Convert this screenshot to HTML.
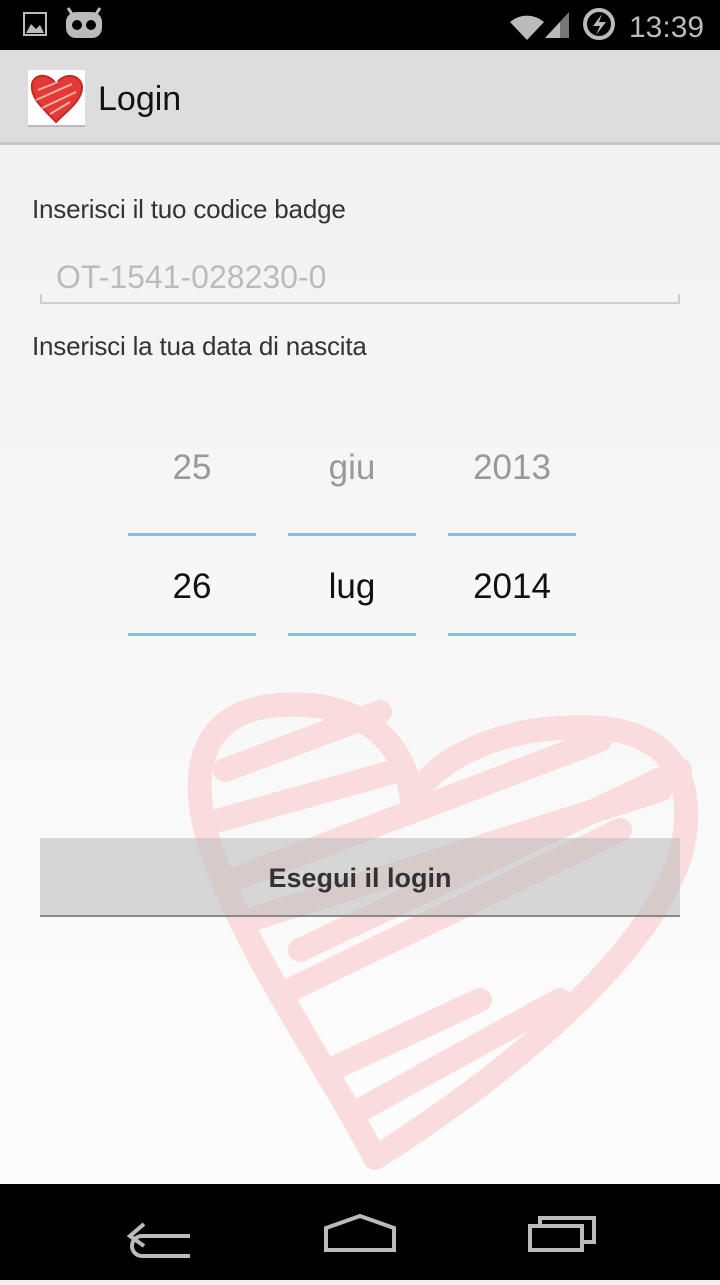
<!DOCTYPE html>
<html><head><meta charset="utf-8"><style>
*{margin:0;padding:0;box-sizing:border-box}
body{width:720px;height:1280px;overflow:hidden;font-family:"Liberation Sans",sans-serif;position:relative;background:linear-gradient(#f0f0f0,#f6f6f6 500px,#fcfcfc 1100px)}
.sb{position:absolute;top:0;left:0;width:720px;height:50px;background:#000}
.ab{position:absolute;top:50px;left:0;width:720px;height:95px;background:#dddddd;border-bottom:3px solid #c6c6c6}
.t{position:absolute;font-size:26px;color:#333;letter-spacing:-0.2px}
.nav{position:absolute;top:1184px;left:0;width:720px;height:96px;background:#000}
.col{position:absolute;width:128px;text-align:center;font-size:35px}
.ln{position:absolute;width:128px;height:3px;background:#6dc8e8}
</style></head><body>
<div class="sb">
<svg width="720" height="50" style="position:absolute;left:0;top:0">
<rect x="24" y="13" width="22" height="22" fill="none" stroke="#bbb" stroke-width="2"/>
<path d="M26 33 L31 24 L36 29 L40 25 L44 33 Z" fill="#bbb"/>
<path d="M68 8 L72 14 M100 8 L96 14" stroke="#bbb" stroke-width="3"/>
<rect x="66" y="12" width="36" height="26" rx="10" fill="#bbb"/>
<circle cx="77" cy="25" r="5" fill="#000"/><circle cx="91" cy="25" r="5" fill="#000"/>
<path d="M510 22 A26 26 0 0 1 544 22 L527 40 Z" fill="#bbb"/>
<path d="M545 38 L569 12 L569 38 Z" fill="#777"/><path d="M545 38 L560 22 L560 38 Z" fill="#bbb"/>
<circle cx="599" cy="24" r="14" fill="none" stroke="#bbb" stroke-width="4"/>
<path d="M602 14 L593 26 L600 26 L596 35 L606 22 L599 22 Z" fill="#bbb"/>
<text x="629" y="37" font-family="Liberation Sans" font-size="30" fill="#bbb">13:39</text>
</svg></div>
<div class="ab">
<div style="position:absolute;left:28px;top:20px;width:57px;height:57px;background:#fff;border-bottom:2px solid #bbb">
<svg width="57" height="57"><path d="M28 52 C15 38 2 28 4 14 C6 4 20 2 28 14 C36 2 52 4 54 16 C55 30 40 40 28 52Z" fill="#e53935" stroke="#c62828" stroke-width="2"/><path d="M10 20 L30 12 M8 30 L44 14 M14 38 L48 22 M22 44 L42 32" stroke="#fff" stroke-width="2" opacity=".6"/></svg></div>
<div style="position:absolute;left:98px;top:30px;font-size:34px;color:#111">Login</div>
</div>
<svg width="720" height="1280" style="position:absolute;left:0;top:0">
<g fill="none" stroke="#fadcdc" stroke-width="24" stroke-linecap="round" stroke-linejoin="round">
<path d="M375 1158 C330 1070 250 960 215 860 C185 780 195 710 280 705 C360 700 405 740 412 800 C440 750 520 722 600 728 C680 735 695 790 682 850 C660 930 560 1040 375 1158Z"/>
<path d="M225 770 L380 712 M220 820 L400 770 M232 880 L600 740 M250 920 L660 790 M290 990 L620 830 M330 1070 L480 1000 M360 1110 L560 1000 M300 950 L680 770"/>
</g>
</svg>
<div class="t" style="left:32px;top:194px">Inserisci il tuo codice badge</div>
<div style="position:absolute;left:56px;top:259px;font-size:32px;color:#bbb">OT-1541-028230-0</div>
<div style="position:absolute;left:40px;top:302px;width:640px;height:2px;background:#cfcfcf"></div>
<div style="position:absolute;left:40px;top:294px;width:2px;height:10px;background:#cfcfcf"></div>
<div style="position:absolute;left:678px;top:294px;width:2px;height:10px;background:#cfcfcf"></div>
<div class="t" style="left:32px;top:331px">Inserisci la tua data di nascita</div>
<div class="col" style="left:128px;top:448px;color:#999">25</div>
<div class="col" style="left:288px;top:448px;color:#999">giu</div>
<div class="col" style="left:448px;top:448px;color:#999">2013</div>
<div class="ln" style="left:128px;top:533px"></div><div class="ln" style="left:288px;top:533px"></div><div class="ln" style="left:448px;top:533px"></div>
<div class="col" style="left:128px;top:567px;color:#111">26</div>
<div class="col" style="left:288px;top:567px;color:#111">lug</div>
<div class="col" style="left:448px;top:567px;color:#111">2014</div>
<div class="ln" style="left:128px;top:633px"></div><div class="ln" style="left:288px;top:633px"></div><div class="ln" style="left:448px;top:633px"></div>
<div style="position:absolute;left:40px;top:838px;width:640px;height:79px;background:rgba(190,190,190,0.6);border-bottom:2px solid #888;text-align:center;line-height:80px;font-size:27px;font-weight:bold;color:#333">Esegui il login</div>
<div class="nav"><svg width="720" height="96">
<g fill="none" stroke="#bbb" stroke-width="4"><path d="M190 52 L142 52 A10 10 0 0 0 142 72 L190 72"/><path d="M144 40 L130 52 L144 62"/>
<path d="M326 66 L326 44 L360 32 L394 44 L394 66 Z"/>
<rect x="530" y="42" width="52" height="24"/><path d="M540 42 L540 34 L594 34 L594 58 L582 58"/></g>
</svg></div>
</body></html>
